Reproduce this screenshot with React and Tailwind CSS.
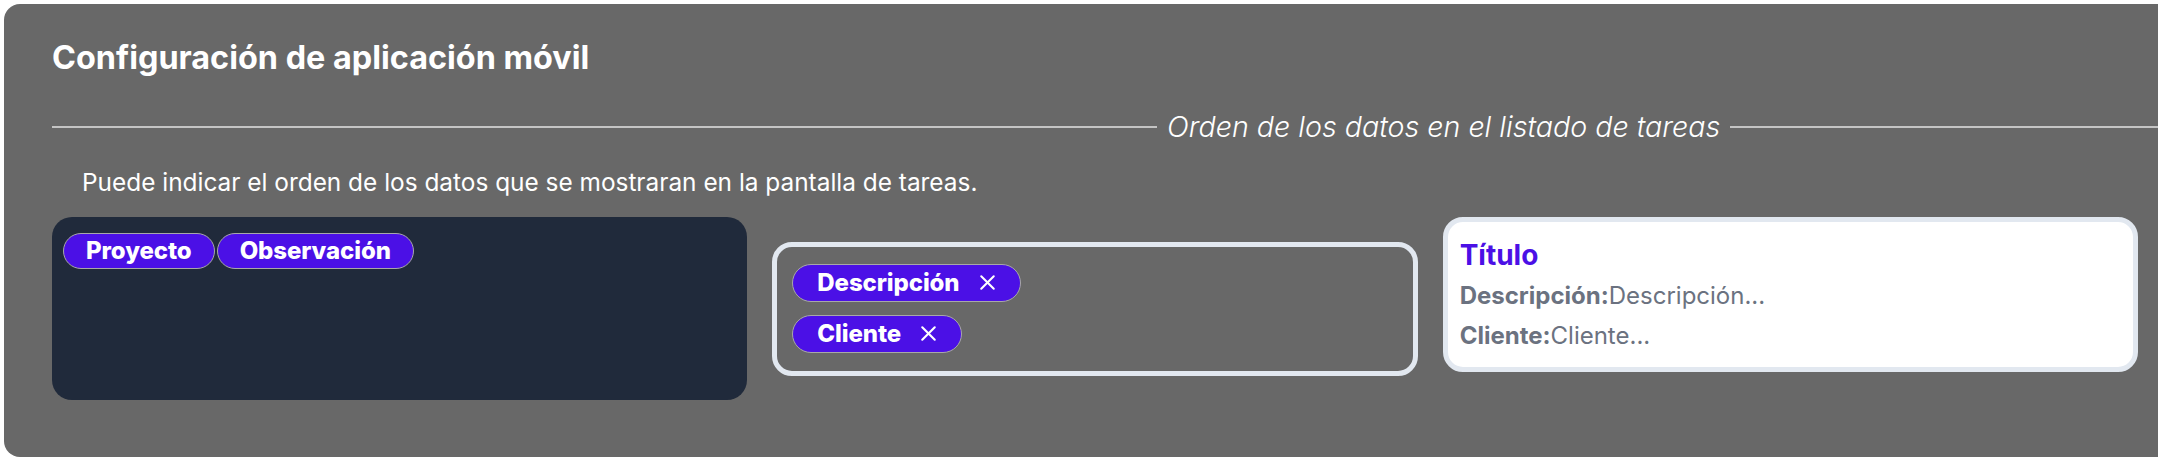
import { X } from 'lucide-react';

const available = ['Proyecto', 'Observación'];
const selected = ['Descripción', 'Cliente'];

function Chip({ label, onRemove }) {
  return (
    <span className="inline-flex h-[38px] items-center rounded-full border border-[#a8a8a8] bg-[#4b10e6] pl-6 pr-5 text-[24px] font-extrabold tracking-[-0.1px] text-white">
      {label}
      {onRemove && <X size={25} strokeWidth={2} className="ml-[15px]" />}
    </span>
  );
}

export default function App() {
  return (
    <div className="overflow-hidden bg-white pl-1 pt-1 pb-[5px] font-['Inter',sans-serif]">
      <div className="h-[453px] w-[2240px] rounded-2xl bg-[#686868] px-12 pt-[34px]">
        <h2 className="text-[32.4px] leading-10 font-bold text-white">Configuración de aplicación móvil</h2>

        <div className="mt-[33px] flex h-8 items-center">
          <div className="h-[2px] w-[1105px] bg-[#c4c4c4]" />
          <span className="px-2.5 text-[28.6px] font-light italic text-white">Orden de los datos en el listado de tareas</span>
          <div className="h-[2px] flex-1 bg-[#c4c4c4]" />
        </div>

        <p className="mt-[23px] pl-[30px] text-[24.4px] leading-8 text-white">
          Puede indicar el orden de los datos que se mostraran en la pantalla de tareas.
        </p>

        <div className="mt-[19px] grid w-[2086px] grid-cols-3 items-start">
          <div className="flex h-[183px] flex-wrap content-start gap-[2px] rounded-[20px] bg-[#202a3b] px-[11px] pt-4">
            {available.map((item) => (
              <span
                key={item}
                className="inline-flex h-9 items-center rounded-full border border-[#a8a8a8] bg-[#4b10e6] px-[22px] text-[24px] font-extrabold tracking-[-0.1px] text-white"
              >
                {item}
              </span>
            ))}
          </div>

          <div className="mx-[25px] flex flex-col items-start gap-[13px] self-center rounded-[20px] border-[5px] border-[#e2e8f0] px-[15px] pt-[17px] pb-[18px]">
            {selected.map((item) => (
              <Chip key={item} label={item} onRemove={() => {}} />
            ))}
          </div>

          <div className="flex h-[155px] flex-col rounded-[20px] border-[5px] border-[#e2e8f0] bg-white px-3 pt-[15px]">
            <span className="text-[28px] leading-9 font-bold text-[#4b10e6]">Título</span>
            <span className="mt-[3px] text-[24px] leading-10 text-[#6b7280]">
              <b className="font-bold">Descripción:</b>Descripción...
            </span>
            <span className="text-[24px] leading-10 text-[#6b7280]">
              <b className="font-bold">Cliente:</b>Cliente...
            </span>
          </div>
        </div>
      </div>
    </div>
  );
}
